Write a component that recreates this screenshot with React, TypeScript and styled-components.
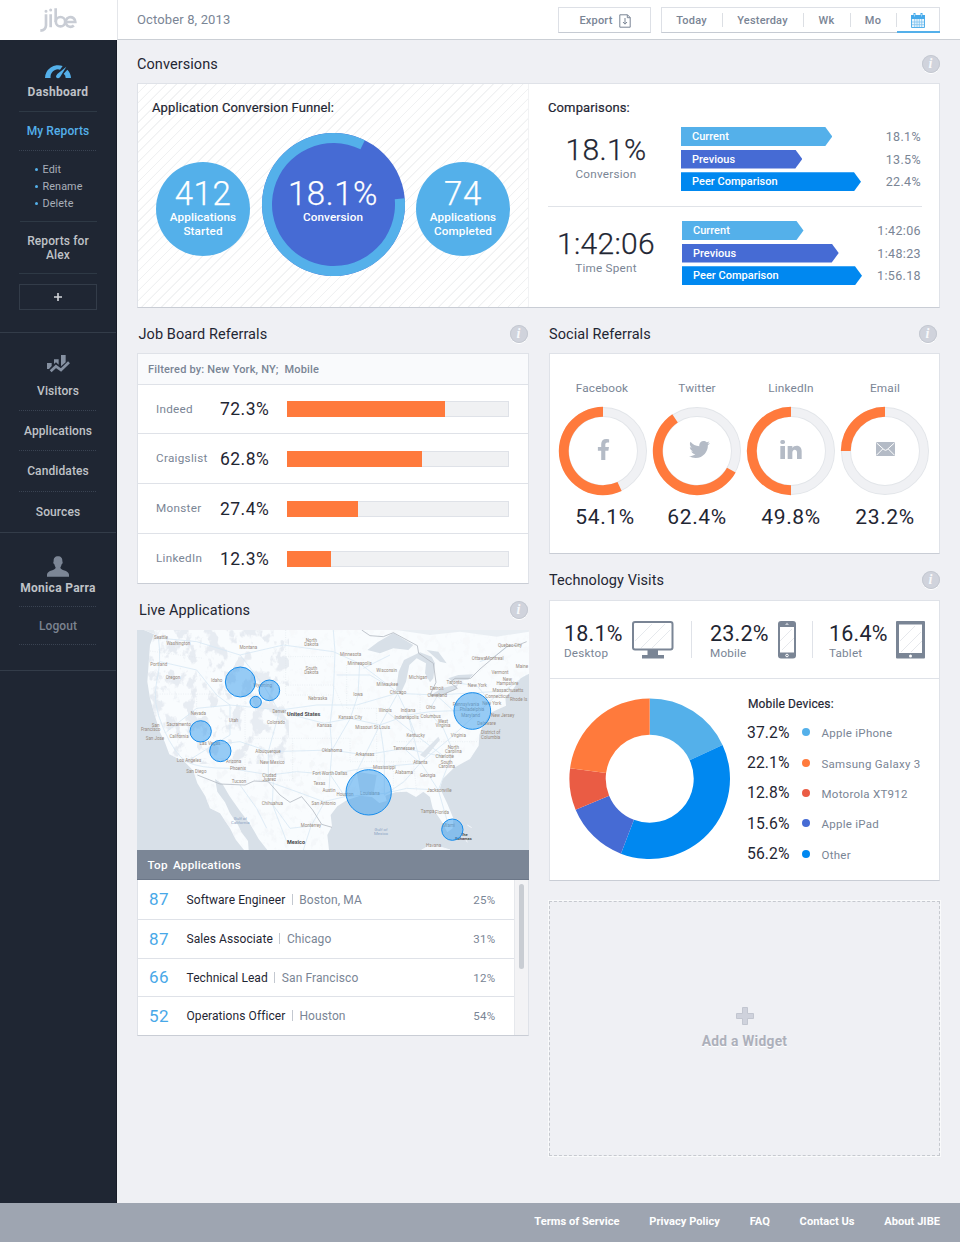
import React from 'react';
import styled, { createGlobalStyle, css } from 'styled-components';
import { FaFacebookF, FaTwitter } from 'react-icons/fa';

const c = {
  ink: '#1f2633',
  slate: '#7a8595',
  muted: '#b4bbc6',
  line: '#dfe2e8',
  page: '#eff0f4',
  sky: '#54b0ea',
  indigo: '#466bd4',
  blue: '#0088f0',
  orange: '#ff7a3c',
  red: '#ea5c44',
};

const Global = createGlobalStyle`
  * { box-sizing: border-box; }
  body { margin: 0; background: ${c.page}; }
  body, button { font-family: Roboto, "Liberation Sans", sans-serif; }
  button { margin: 0; padding: 0; border: 0; background: none; color: inherit; font: inherit; letter-spacing: inherit; }
  svg { display: block; flex: none; }
`;

const Page = styled.div`
  width: 960px;
  height: 1242px;
  display: grid;
  grid-template: 40px 1163px 39px / 117px 843px;
  color: ${c.ink};
`;

/* ---------- header ---------- */
const LogoCell = styled.div`
  background: #fff;
  display: flex;
  align-items: flex-start;
  padding: 8px 0 0 39px;
`;
const Header = styled.header`
  background: #fff;
  border-bottom: 1px solid #cbcfd5;
  border-left: 1px solid #e4e6ea;
  display: flex;
  align-items: flex-start;
  padding: 7px 20px 0 19px;
  color: ${c.slate};
`;
const DateText = styled.div`
  flex: 1;
  line-height: 25px;
  font-size: 13px;
  letter-spacing: 0.13px;
`;
const Box = styled.div`
  height: 26px;
  display: flex;
  border: 1px solid #dde0e6;
  border-bottom-color: #c6cbd3;
  font-size: 11px;
  font-weight: 500;
  letter-spacing: 0.2px;
  line-height: 24px;
  & + & { margin-left: 10px; }
`;
const ExportButton = styled.button`
  width: 91px;
  padding: 1px 0 0 1px;
  display: flex;
  align-items: center;
  justify-content: center;
  gap: 6px;
`;
const RangeButton = styled.button<{ $w: number; $active?: boolean }>`
  width: ${p => p.$w}px;
  height: ${p => (p.$active ? 25 : 24)}px;
  padding: 1px 2px 0 0;
  display: flex;
  align-items: center;
  justify-content: center;
  background: linear-gradient(#dcdfe4, #dcdfe4) right 5px / 1px 14px no-repeat;
  ${p => p.$active && css`
    background: none;
    border-bottom: 2px solid ${c.sky};
    margin-right: -1px;
  `}
`;

/* ---------- sidebar ---------- */
const Sidebar = styled.nav`
  background: ${c.ink};
  border-right: 1px solid #171c28;
  color: #bfc2c7;
  font-size: 12px;
  font-weight: 500;
  letter-spacing: 0.1px;
  text-align: center;
`;
const NavSection = styled.div<{ $h: number }>`
  height: ${p => p.$h}px;
  padding: 0 19px 0 20px;
  border-bottom: 1px solid #333c49;
`;
const NavItem = styled.div<{ $h: number; $top?: number; $dotted?: boolean; $plain?: boolean; $tone?: string; $bold?: boolean }>`
  height: ${p => p.$h}px;
  margin: 0 -19px 0 -20px;
  padding-top: ${p => p.$top ?? 0}px;
  display: flex;
  flex-direction: column;
  align-items: center;
  line-height: 14px;
  color: ${p => p.$tone ?? 'inherit'};
  ${p => p.$bold && css`font-weight: 700; letter-spacing: 0.3px;`}
  ${p => !p.$plain && css`
    background: ${p.$dotted
      ? 'repeating-linear-gradient(90deg, #3a4352 0 1px, transparent 1px 2px)'
      : 'linear-gradient(#2e3945, #2e3945)'} center bottom / 78px 1px no-repeat;
  `}
`;
const IconSlot = styled.div<{ $h: number }>`
  height: ${p => p.$h}px;
`;
const SubList = styled.ul`
  margin: 0;
  padding: 10px 0 0 15px;
  height: 71px;
  list-style: none;
  text-align: left;
  font-size: 10.8px;
  font-weight: 400;
  line-height: 17px;
  color: #a9afb9;
  border-bottom: 1px solid #2e3945;
  li { display: flex; align-items: center; gap: 4.5px; }
  li::before { content: ''; width: 3px; height: 3px; border-radius: 50%; background: ${c.sky}; }
`;
const AddButton = styled.button`
  margin: 10px 0 0 -1px;
  width: 78px;
  height: 26px;
  border: 1px solid #333c49;
  display: flex;
  align-items: center;
  justify-content: center;
`;

/* ---------- main ---------- */
const Main = styled.main`
  padding: 0 20px;
`;
const Columns = styled.div`
  display: grid;
  grid-template-columns: 392px 391px;
  column-gap: 20px;
`;
const Heading = styled.div<{ $h: number; $top: number; $left?: number; $right?: number }>`
  height: ${p => p.$h}px;
  padding: ${p => p.$top}px ${p => p.$right ?? 0}px 0 ${p => p.$left ?? 0}px;
  display: flex;
  align-items: center;
  justify-content: space-between;
  h2 { margin: 0; padding-top: 1px; font-size: 14.5px; font-weight: 400; letter-spacing: 0.07px; }
`;
const Card = styled.section<{ $h: number }>`
  height: ${p => p.$h}px;
  background: #fff;
  border: 1px solid ${c.line};
  border-bottom-color: #c9cdd5;
`;
const InfoDot = styled.span`
  width: 18px;
  height: 18px;
  border-radius: 50%;
  background: #d0d3dc;
  box-shadow: inset 0 0 0 1px #c4c8d1, 0 1px 0 #fff;
  color: #f8f9fb;
  font: italic 700 14px/18px "Liberation Serif", serif;
  text-align: center;
  padding-right: 1px;
`;

/* conversions */
const ConversionCard = styled(Card)`
  display: grid;
  grid-template-columns: 391px 1fr;
`;
const Funnel = styled.div`
  padding: 17px 0 0 14px;
  border-right: 1px solid #f1f2f4;
  background: repeating-linear-gradient(135deg, #fff 0 5.6px, #f0f1f2 6px 6.6px, #fff 7px);
`;
const SubTitle = styled.h3<{ $size?: number }>`
  margin: 0;
  font-size: ${p => p.$size ?? 13}px;
  line-height: 14px;
  font-weight: 400;
  letter-spacing: 0.12px;
  -webkit-text-stroke: 0.2px currentColor;
`;
const FunnelRow = styled.div`
  display: flex;
  align-items: flex-start;
  gap: 11.5px;
  padding: 18px 0 0 4px;
`;
const Bubble = styled.div<{ $big?: boolean }>`
  width: ${p => (p.$big ? 143 : 94)}px;
  height: ${p => (p.$big ? 143 : 94)}px;
  margin-top: ${p => (p.$big ? 0 : 29)}px;
  padding-top: ${p => (p.$big ? 44 : 15)}px;
  border-radius: 50%;
  position: relative;
  background: ${p => (p.$big ? c.indigo : c.sky)};
  color: #fff;
  text-align: center;
  font-size: 11.7px;
  font-weight: 500;
  line-height: 14px;
  letter-spacing: 0.1px;
  strong {
    display: block;
    position: relative;
    font-size: 33px;
    font-weight: 300;
    line-height: 33px;
    letter-spacing: 0.6px;
    -webkit-text-stroke: 0.25px #fff;
  }
  span { position: relative; }
  svg { position: absolute; inset: 0; }
`;
const Comparisons = styled.div`
  padding: 17px 17px 0 19px;
`;
const Group = styled.div<{ $top: number; $h: number; $shift?: number }>`
  display: grid;
  grid-template-columns: ${p => 133 + (p.$shift ?? 0)}px 180px 1fr;
  height: ${p => p.$h}px;
  padding-top: ${p => p.$top}px;
  & + & { border-top: 1px solid #e0e3e8; }
`;
const BigStat = styled.div`
  width: 116px;
  text-align: center;
  font-size: 11.7px;
  line-height: 14px;
  letter-spacing: 0.25px;
  color: ${c.slate};
  padding-top: 6px;
  strong {
    display: block;
    color: ${c.ink};
    font-size: 30px;
    font-weight: 300;
    line-height: 34px;
    letter-spacing: 0.3px;
    margin: 0 -4px;
    -webkit-text-stroke: 0.25px ${c.ink};
  }
`;
const Arrows = styled.div`
  display: flex;
  flex-direction: column;
  gap: 3.6px;
`;
const Arrow = styled.div<{ $w: number; $color: string }>`
  width: ${p => p.$w}px;
  height: 19px;
  padding-left: 11px;
  background: ${p => p.$color};
  clip-path: polygon(0 0, calc(100% - 7px) 0, 100% 50%, calc(100% - 7px) 100%, 0 100%);
  color: #fff;
  font-size: 11px;
  font-weight: 500;
  line-height: 19px;
  letter-spacing: 0.03px;
`;
const ArrowValues = styled(Arrows)`
  text-align: right;
  font-size: 12.5px;
  line-height: 19px;
  letter-spacing: 0.35px;
  padding-right: 1px;
  color: ${c.slate};
`;

/* job board */
const FilterRow = styled.div`
  height: 31px;
  padding: 1px 0 0 10px;
  background: #f9fafc;
  border-bottom: 1px solid ${c.line};
  font-size: 11px;
  font-weight: 500;
  line-height: 30px;
  letter-spacing: 0.18px;
  white-space: pre;
  color: ${c.slate};
`;
const JobRow = styled.div<{ $h: number }>`
  height: ${p => p.$h}px;
  display: grid;
  grid-template-columns: 64px 67px 222px;
  align-items: center;
  padding-left: 18px;
  & + & { border-top: 1px solid ${c.line}; }
`;
const JobName = styled.span`
  padding-bottom: 1px;
  font-size: 11.7px;
  letter-spacing: 0.3px;
  color: ${c.slate};
`;
const JobPct = styled.strong`
  font-size: 17.5px;
  font-weight: 400;
  letter-spacing: 0.45px;
`;
const Track = styled.div`
  height: 16px;
  background: #f0f1f3;
  border: 1px solid ${c.line};
`;
const Fill = styled.div`
  height: 16px;
  margin: -1px 0 0 -1px;
  background: ${c.orange};
`;

/* social */
const SocialCard = styled(Card)`
  display: grid;
  grid-template-columns: repeat(4, 94px);
  padding: 27px 0 0 6px;
`;
const SocialItem = styled.div`
  display: flex;
  flex-direction: column;
  align-items: center;
  font-size: 11.8px;
  line-height: 14px;
  letter-spacing: 0.15px;
  color: ${c.slate};
  strong {
    color: ${c.ink};
    font-size: 21px;
    font-weight: 400;
    line-height: 24px;
    letter-spacing: 0.6px;
  }
  &:first-child span { margin-left: -2px; }
  &:first-child strong { margin-left: 4px; }
`;
const Ring = styled.div<{ $nudge?: number }>`
  width: 90px;
  height: 90px;
  margin: 11px 0 9px;
  padding: 0 0 4px ${p => p.$nudge ?? 0}px;
  position: relative;
  display: grid;
  place-items: center;
  color: ${c.muted};
  > svg:first-child { position: absolute; inset: 0; }
`;

/* technology */
const DeviceRow = styled.div`
  height: 78px;
  display: flex;
  align-items: center;
  padding-left: 14px;
  border-bottom: 1px solid ${c.line};
`;
const Device = styled.div<{ $w: number; $gap: number; $pad?: number }>`
  width: ${p => p.$w}px;
  height: 37px;
  display: flex;
  gap: ${p => p.$gap}px;
  padding-left: ${p => p.$pad ?? 0}px;
  border-left: ${p => (p.$pad ? `1px solid ${c.line}` : 0)};
`;
const DeviceStat = styled.div`
  width: 60px;
  font-size: 11.7px;
  line-height: 14px;
  letter-spacing: 0.2px;
  color: ${c.slate};
  strong {
    display: block;
    color: ${c.ink};
    font-size: 21.5px;
    font-weight: 400;
    line-height: 25px;
    letter-spacing: 0.2px;
  }
`;
const DonutRow = styled.div`
  display: flex;
  padding: 19px 0 0 19px;
`;
const Legend = styled.div`
  padding-left: 16px;
  margin-top: -1px;
  h3 { margin: 0 0 6px 1px; }
`;
const LegendRow = styled.div`
  height: 30.4px;
  display: grid;
  grid-template-columns: 55px 19.5px auto;
  align-items: center;
  strong { font-size: 15.7px; font-weight: 400; letter-spacing: 0.1px; }
  span { padding-top: 2px; font-size: 11.5px; letter-spacing: 0.27px; color: ${c.slate}; }
`;
const Dot = styled.i<{ $color: string }>`
  width: 8px;
  height: 8px;
  border-radius: 50%;
  background: ${p => p.$color};
`;
const AddWidget = styled.button`
  width: 391px;
  height: 255px;
  margin-top: 20px;
  padding-bottom: 3px;
  border: 1px dashed #c6c9cf;
  outline: 1px solid #f9fafb;
  display: flex;
  flex-direction: column;
  align-items: center;
  justify-content: center;
  gap: 7px;
  color: #adb0bb;
  font-size: 13.8px;
  font-weight: 700;
  letter-spacing: 0.25px;
  text-shadow: 0 1px 0 #fff;
`;

/* live applications */
const ListHead = styled.div`
  height: 30px;
  padding: 1px 0 0 10.5px;
  background: #7b8696;
  border-bottom: 1px solid #6c7788;
  color: #fff;
  font-size: 11.7px;
  font-weight: 500;
  line-height: 28px;
  letter-spacing: 0.25px;
  word-spacing: 2px;
`;
const List = styled.div`
  height: 156px;
  display: grid;
  grid-template-columns: 1fr 14px;
  background: #fff;
  border: 1px solid ${c.line};
  border-top: 0;
  border-bottom-color: #c9cdd5;
`;
const AppRow = styled.div<{ $h: number }>`
  height: ${p => p.$h}px;
  display: grid;
  grid-template-columns: 37.5px 1fr auto;
  align-items: center;
  padding: 0 18.5px 0 11px;
  font-size: 12px;
  letter-spacing: 0.08px;
  & + & { border-top: 1px solid ${c.line}; }
  strong { padding-bottom: 1px; color: #48a8e8; font-size: 17px; font-weight: 400; letter-spacing: 0.4px; }
  em { font-style: normal; color: ${c.slate}; letter-spacing: 0.1px; }
  em::before { content: ''; display: inline-block; width: 1px; height: 11px; margin: 0 6.5px; vertical-align: -1px; background: #c3c8d0; }
  small { font-size: 11.5px; letter-spacing: 0.3px; color: ${c.slate}; }
`;
const Scroll = styled.div`
  background: #f3f3f5;
  border-left: 1px solid #e6e8ec;
  padding: 4px 0 0 4px;
  &::before { content: ''; display: block; width: 5px; height: 85px; border-radius: 3px; background: #c9cdd3; }
`;

const Footer = styled.footer`
  grid-column: 1 / 3;
  background: #9ea5b1;
  color: #fff;
  display: flex;
  justify-content: flex-end;
  gap: 29.8px;
  padding-right: 20px;
  font-size: 11.1px;
  font-weight: 700;
  letter-spacing: 0.02px;
  line-height: 38px;
`;

/* ---------- drawings ---------- */
const pt = (cx: number, cy: number, r: number, a: number) => {
  const t = (a * Math.PI) / 180;
  return `${(cx + r * Math.sin(t)).toFixed(2)} ${(cy - r * Math.cos(t)).toFixed(2)}`;
};
const sector = (cx: number, cy: number, ro: number, ri: number, a: number, b: number) => {
  const big = b - a > 180 ? 1 : 0;
  return `M${pt(cx, cy, ro, a)}A${ro} ${ro} 0 ${big} 1 ${pt(cx, cy, ro, b)}L${pt(cx, cy, ri, b)}A${ri} ${ri} 0 ${big} 0 ${pt(cx, cy, ri, a)}Z`;
};

const Logo = () => (
  <svg width="38" height="25" viewBox="117 24 114 75" fill="none" stroke="#c9cdd5" strokeWidth="8">
    <path d="M138 43V76Q137 91 121 92M152 43V82M167 25V66" />
    <circle cx="181.500" cy="65" r="14" />
    <path d="M198 66H226A14.500 14.500 0 1 0 221.500 76.500" />
    <circle cx="138" cy="34" r="2" strokeWidth="5" />
    <circle cx="152" cy="30" r="2" strokeWidth="5" />
  </svg>
);
const ExportIcon = () => (
  <svg width="12" height="14" viewBox="0 0 12 14" fill="none" stroke={c.slate}>
    <path d="M.8 .8H8.500L11.200 3.500V13.200H.8ZM8.300 .8V3.700H11.200M6 4V10M4 8L6 10.200L8 8" />
  </svg>
);
const CalendarIcon = () => (
  <svg width="14" height="15" viewBox="0 0 14 15">
    <path d="M0 2H14V6H0ZM2.500 0H4.500V4H2.500ZM9.500 0H11.500V4H9.500Z" fill="#45a9ea" />
    <path d="M3.500 1V3.500M10.500 1V3.500" stroke="#9bd2f5" />
    <path d="M.5 6V14.500H13.500V6" fill="#eaf6fd" stroke="#54b0ea" />
    <path d="M1 9H13M1 11.700H13M3.700 6V14M6 6V14M8.300 6V14M10.700 6V14" stroke="#7dc3ef" strokeWidth=".8" />
  </svg>
);
const GaugeIcon = () => (
  <svg width="26" height="14" viewBox="0 0 78 42" fill={c.sky}>
    <path d="M0 39A39 39 0 0 1 53 3L45 14A22 22 0 0 0 17 39Z" />
    <path d="M67 14A39 39 0 0 1 78 39H62Q62 30 56 26Z" />
    <path d="M64 5L45 37Q38 43 33 36Q33 31 37 27Z" />
  </svg>
);
const ChartIcon = () => (
  <svg width="23" height="18" viewBox="0 0 69 54" fill="#8590a1">
    <path d="M0 24H14V33L6 42H0ZM21 13H35V29L27 22L21 27ZM42 0H56V22L42 34Z" />
    <path d="M11 49L27 34L42 45L66 22" fill="none" stroke="#8590a1" strokeWidth="8" />
  </svg>
);
const PersonIcon = () => (
  <svg width="22" height="21" viewBox="0 0 66 62" fill="#7c8696">
    <path d="M33 0C42 0 47 6 46 15C48 18 47 23 44 24C43 29 41 31 40 34C40 44 64 41 66 55V62H0V55C2 41 26 44 26 34C25 31 23 29 22 24C19 23 18 18 20 15C19 6 24 0 33 0Z" />
  </svg>
);
const PlusIcon = () => (
  <svg width="8" height="8" viewBox="0 0 8 8" stroke="#d3d6da" strokeWidth="1.6"><path d="M4 0V8M0 4H8" /></svg>
);
const LinkedInIcon = () => (
  <svg width="22" height="19" viewBox="0 0 66 57" fill="currentColor">
    <rect x="1" y="0" width="14" height="12" rx="5" />
    <path d="M1 18H15V57H1ZM23 18H37V24C42 15 65 13 65 34V57H51V38C51 26 37 27 37 38V57H23Z" />
  </svg>
);
const MailIcon = () => (
  <svg width="19" height="14" viewBox="0 0 57 42">
    <rect width="57" height="42" rx="3" fill={c.muted} />
    <path d="M2 3L24 23Q28.500 27 33 23L55 3M2 39L20 21M55 39L37 21" fill="none" stroke="#fff" strokeWidth="3" />
  </svg>
);
const Monitor = () => (
  <svg width="42" height="38" viewBox="0 0 42 38">
    <path d="M15.500 28H26V34H32V37.500H10V34H15.500Z" fill={c.slate} />
    <rect x="1" y="1" width="39.500" height="27.500" rx="2" fill="#fff" stroke={c.slate} strokeWidth="2" />
    <path d="M3 20L20 3M9 27L33 3M20 27L38 9" stroke="#e6e9ed" />
  </svg>
);
const Phone = () => (
  <svg width="18" height="38" viewBox="0 0 18 38">
    <rect width="18" height="37.500" rx="3" fill={c.slate} />
    <rect x="2" y="6" width="14" height="25.500" fill="#fff" />
    <path d="M2 20L14 8M4 29L16 17" stroke="#e6e8ec" />
    <path d="M7 4L9 1.500L11 4Z" fill="#c6ccd5" />
    <circle cx="9" cy="34.500" r="1.300" fill="none" stroke="#fff" />
  </svg>
);
const Tablet = () => (
  <svg width="29" height="38" viewBox="0 0 29 38">
    <rect width="29" height="37.500" rx="1" fill={c.slate} />
    <rect x="3" y="3.500" width="23" height="28.500" fill="#fff" />
    <path d="M4 20L19 5M5 31L25 11M15 31L26 20" stroke="#e6e8ec" />
    <circle cx="14.500" cy="35" r="1.500" fill="#fff" />
  </svg>
);
const BigPlus = () => (
  <svg width="20" height="20" viewBox="0 0 20 20">
    <path d="M7.500 1.500H12.500V7.500H18.500V12.500H12.500V18.500H7.500V12.500H1.500V7.500H7.500Z" fill="#cfd2dc" stroke="#c2c6d0" />
  </svg>
);
const RingChart = ({ from, to }: { from: number; to: number }) => (
  <svg width="90" height="90" viewBox="0 0 90 90">
    <circle cx="45" cy="45" r="39" fill="none" stroke="#e2e5e9" strokeWidth="10" />
    <circle cx="45" cy="45" r="39" fill="none" stroke="#f0f1f4" strokeWidth="8.200" />
    <path d={sector(45, 45, 44.2, 34.3, from, to)} fill={c.orange} />
  </svg>
);

const slices: [number, number, string][] = [
  [0, 65.1, c.sky], [65.1, 201, c.blue], [201, 247.3, c.indigo], [247.3, 277.5, c.red], [277.5, 360, c.orange],
];
const Donut = () => (
  <svg width="162" height="162" viewBox="0 0 162 162">
    {slices.map(([a, b, f]) => <path key={a} d={sector(80.7, 80.7, 80.3, 44, a, b)} fill={f} />)}
  </svg>
);

const places: [number, number, string][] = [
  [93, 128, 'Seattle'], [145, 146, 'Washington'], [86, 208, 'Portland'], [129, 248, 'Oregon'], [355, 158, 'Montana'],
  [260, 257, 'Idaho'], [398, 271, 'Wyoming'], [205, 357, 'Nevada'], [311, 377, 'Utah'], [146, 390, 'Sacramento'],
  [77, 391, 'San'], [62, 403, 'Francisco'], [75, 432, 'San Jose'], [147, 426, 'California'], [240, 446, 'Las Vegas'],
  [177, 497, 'Los Angeles'], [199, 529, 'San Diego'], [311, 499, 'Arizona'], [324, 520, 'Phoenix'], [327, 559, 'Tucson'],
  [544, 136, 'North'], [544, 149, 'Dakota'], [544, 221, 'South'], [544, 234, 'Dakota'], [563, 312, 'Nebraska'],
  [448, 350, 'Denver'], [438, 382, 'Colorado'], [414, 470, 'Albuquerque'], [427, 504, 'New Mexico'], [418, 541, 'Ciudad'],
  [418, 553, 'Juarez'], [427, 627, 'Chihuahua'], [583, 393, 'Kansas'], [606, 467, 'Oklahoma'], [600, 537, 'Fort Worth   Dallas'],
  [568, 567, 'Texas'], [597, 588, 'Austin'], [581, 626, 'San Antonio'], [645, 600, 'Houston'], [543, 693, 'Monterrey'],
  [662, 179, 'Minnesota'], [689, 206, 'Minneapolis'], [770, 228, 'Wisconsin'], [772, 269, 'Milwaukee'], [804, 294, 'Chicago'],
  [864, 247, 'Michigan'], [684, 299, 'Iowa'], [661, 368, 'Kansas City'], [728, 398, 'Missouri  St Louis'], [766, 347, 'Illinois'],
  [834, 347, 'Indiana'], [830, 368, 'Indianapolis'], [902, 337, 'Ohio'], [902, 364, 'Columbus'], [920, 281, 'Detroit'],
  [922, 303, 'Cleveland'], [857, 421, 'Kentucky'], [939, 379, 'West'], [939, 391, 'Virginia'], [985, 421, 'Virginia'],
  [822, 462, 'Tennessee'], [705, 480, 'Arkansas'], [763, 519, 'Mississippi'], [822, 534, 'Alabama'], [893, 541, 'Georgia'],
  [871, 504, 'Atlanta'], [970, 457, 'North'], [970, 470, 'Carolina'], [944, 486, 'Charlotte'], [950, 503, 'South'],
  [950, 516, 'Carolina'], [928, 586, 'Jacksonville'], [893, 651, 'Tampa'], [936, 654, 'Florida'], [956, 692, 'Miami'],
  [720, 597, 'Louisiana'], [911, 752, 'Havana'], [973, 262, 'Toronto'], [1042, 273, 'New York'], [1047, 191, 'Ottawa'],
  [1094, 191, 'Montreal'], [1140, 152, 'Quebec City'], [1110, 232, 'Vermont'], [1132, 254, 'New'], [1132, 267, 'Hampshire'],
  [1134, 287, 'Massachusetts'], [1102, 306, 'Connecticut'], [1085, 325, 'New York'], [1166, 313, 'Rhode Is'], [1118, 361, 'New Jersey'],
  [1070, 385, 'Delaware'], [1082, 414, 'District of'], [1082, 427, 'Columbia'], [1008, 329, 'Pennsylvania'], [1026, 345, 'Philadelphia'],
  [1022, 363, 'Maryland'], [1176, 214, 'Maine'],
];
const bubbles = [
  [331, 261, 45], [418, 286, 31], [377, 321, 17], [212, 409, 32], [271, 468, 32], [1027, 348, 55], [716, 592, 68], [967, 704, 32],
];
const land = 'M42 105L72 118L60 150L56 205L52 260L60 310L74 360L90 412L104 440L118 478L165 502L190 527L202 565L226 604L240 640L270 655L300 700L318 735L342 765H356L354 738L334 712L324 690L300 655L285 622L262 590L255 552L278 568L298 602L330 648L362 690L386 732L412 765H597L592 720L606 694L602 660L622 634L650 616L690 602L726 606L748 624L770 618L766 602L796 592L830 590L858 606L880 590L900 606L908 640L934 678L952 712L968 700L970 670L952 626L930 580L938 552L972 518L1020 492L1046 452L1048 420L1058 392L1084 352L1128 332L1126 306L1148 284L1172 250L1197 236V105Z';

const UsMap = () => (
  <svg width="392" height="220" viewBox="21 105 1176 660">
    <defs>
      <clipPath id="land"><path d={land} /></clipPath>
      <filter id="relief" x="0" y="0" width="1" height="1">
        <feTurbulence type="fractalNoise" baseFrequency="0.03 0.022" numOctaves="4" seed="7" />
        <feColorMatrix values="0 0 0 0 .8  0 0 0 0 .835  0 0 0 0 .885  9 0 0 0 -4.6" />
      </filter>
      <filter id="hills" x="0" y="0" width="1" height="1">
        <feTurbulence type="fractalNoise" baseFrequency="0.05 0.04" numOctaves="3" seed="21" />
        <feColorMatrix values="0 0 0 0 .9  0 0 0 0 .925  0 0 0 0 .95  7 0 0 0 -3.8" />
      </filter>
    </defs>
    <rect x="21" y="105" width="1176" height="660" fill="#d8e0e8" />
    <path d={land} fill="#f9fcfe" />
    <g clipPath="url(#land)">
      <rect x="21" y="105" width="455" height="400" filter="url(#relief)" />
      <rect x="21" y="490" width="560" height="275" filter="url(#hills)" opacity=".8" />
      <rect x="476" y="105" width="721" height="500" filter="url(#hills)" opacity=".45" />
      <g fill="none" stroke="#d9e8f4" strokeWidth="2.500">
        <path d="M85 125Q95 200 80 260T100 400T170 500T300 520L420 540L500 530L600 538L700 520L870 505L960 430L1090 310L1190 240" />
        <path d="M90 200L200 225L260 300L300 330L450 345L560 330L680 330L800 295L920 300L1090 290" />
        <path d="M95 130L200 140L330 180L460 150L610 170L690 206L800 290L834 360L870 500L925 585L955 690" />
        <path d="M110 410L200 340L300 330L300 420L250 450L170 500M240 450L330 440L420 470L606 465L705 480L822 460L945 486" />
        <path d="M415 560L415 470L448 350L400 270L330 180M448 350L583 385L661 370L750 390L834 360L900 350L1020 345" />
        <path d="M597 588L600 538L606 465L600 390L610 300L615 170L610 105M689 206L684 300L661 370L606 465" />
        <path d="M415 560L500 590L581 620L645 605L766 595L830 580L925 585M645 605L600 538M763 600L763 480L750 390L804 294" />
        <path d="M430 560L427 627L480 700L543 693L581 626M427 627L470 740M543 693L520 765M330 570L380 640L410 700" />
        <path d="M822 460L857 420L834 360M871 505L822 460M870 505L822 560L763 600M899 355L940 400L970 470L925 585M1049 200L1092 185L1140 150M973 262L1042 273L1080 320" />
        <path d="M750 390L705 480L645 600M902 337L922 303L973 350M766 347L857 420L944 486M700 220L780 180M620 240H720L770 270" />
      </g>
      <g fill="none" stroke="#dfe5eb" strokeWidth="1.500" strokeDasharray="3 4">
        <path d="M60 168L220 190M75 297H390M467 105V300H610M467 185H610M467 270H610L640 340M200 297V380L270 450M345 297V560M345 430H660M488 430V555H370M660 430V500H740M740 340V500H900M650 210V340H780M870 300V400M800 440H1045M790 500V590M850 500L860 590" />
      </g>
      <path d="M712 165L745 140L790 114L850 150L835 165L790 160L750 175ZM798 285L806 230L822 195L870 172L905 185L915 205L910 250L900 262L885 235L888 205L860 190L838 210L828 260L812 295ZM900 302L935 280L985 268L975 285L935 300ZM955 250L985 240L1030 238L1015 254L965 258ZM890 165L925 170L950 205L930 200Z" fill="#d8e0e8" />
      <path d="M800 105L900 120L990 110L1100 125L1197 110V105Z" fill="#e9eef3" />
      <path d="M870 480L925 425L930 435L885 488ZM680 530L740 540L730 600L690 590Z" fill="#dde4eb" />
    </g>
    <path d="M42 105L76 118L72 105Z" fill="#e7ecf1" />
    <path d="M875 765L905 748L960 765ZM1004 728L1012 742M1012 690L1025 698" fill="#f3f6fa" stroke="#f3f6fa" strokeWidth="3" />
    <g fill="none" stroke="#b4bac3" strokeWidth="2.500">
      <path d="M695 105L720 122L760 125L790 113L862 152L866 175L910 205L918 262L900 300L935 300L982 280L960 262L975 250L1022 250L1050 222L1100 180L1130 155L1165 150L1190 140" />
      <path d="M202 540L270 567L345 570L372 558L415 560L450 600L480 622L515 605L548 645L575 688L606 697" />
    </g>
    <g fontSize="13.5" textAnchor="middle" fill="#96897d">
      {places.map(([x, y, t], i) => <text key={i} x={x} y={y + 4}>{t}</text>)}
    </g>
    <g fontSize="13" textAnchor="middle" fill="#8ba3c4">
      <text x="331" y="675">Gulf of</text><text x="331" y="687">California</text>
      <text x="753" y="708">Gulf of</text><text x="753" y="720">Mexico</text>
    </g>
    <g fontSize="16.5" fontWeight="700" textAnchor="middle" fill="#4a4a4c">
      <text x="521" y="363">United States</text><text x="498" y="747">Mexico</text>
      <text x="1003" y="722" fontSize="12">The</text><text x="1000" y="734" fontSize="12">Bahamas</text>
    </g>
    <g fill="#45a3ec" fillOpacity=".55" stroke="#168cec" strokeWidth="3">
      {bubbles.map(([x, y, r]) => <circle key={x} cx={x} cy={y} r={r} />)}
    </g>
  </svg>
);

/* ---------- data ---------- */
const arrows = [
  { big: '18.1%', label: 'Conversion', rows: [[151.3, '18.1%'], [121.3, '13.5%'], [180, '22.4%']] },
  { big: '1:42:06', label: 'Time Spent', rows: [[121.5, '1:42:06'], [156.7, '1:48:23'], [180, '1:56.18']] },
] as { big: string; label: string; rows: [number, string][] }[];
const arrowStyle: [string, string][] = [['Current', c.sky], ['Previous', c.indigo], ['Peer Comparison', c.blue]];
const jobs: [string, string, number, number][] = [
  ['Indeed', '72.3%', 71.6, 48], ['Craigslist', '62.8%', 61.5, 50], ['Monster', '27.4%', 32.1, 50], ['LinkedIn', '12.3%', 20, 50],
];
const legend: [string, string, string][] = [
  ['37.2%', 'Apple iPhone', c.sky], ['22.1%', 'Samsung Galaxy 3', c.orange], ['12.8%', 'Motorola XT912', c.red],
  ['15.6%', 'Apple iPad', c.indigo], ['56.2%', 'Other', c.blue],
];
const apps: [string, string, string, string, number][] = [
  ['87', 'Software Engineer', 'Boston, MA', '25%', 39], ['87', 'Sales Associate', 'Chicago', '31%', 39],
  ['66', 'Technical Lead', 'San Francisco', '12%', 38], ['52', 'Operations Officer', 'Houston', '54%', 39],
];

const Title = ({ children, ...p }: { children: string; $h: number; $top: number; $left?: number; $right?: number }) => (
  <Heading {...p}><h2>{children}</h2><InfoDot>i</InfoDot></Heading>
);

export default function App() {
  return (
    <Page>
      <Global />
      <LogoCell><Logo /></LogoCell>
      <Header>
        <DateText>October 8, 2013</DateText>
        <Box><ExportButton>Export <ExportIcon /></ExportButton></Box>
        <Box>
          <RangeButton $w={61}>Today</RangeButton>
          <RangeButton $w={81}>Yesterday</RangeButton>
          <RangeButton $w={47}>Wk</RangeButton>
          <RangeButton $w={46}>Mo</RangeButton>
          <RangeButton $w={43} $active><CalendarIcon /></RangeButton>
        </Box>
      </Header>

      <Sidebar>
        <NavSection $h={293}>
          <NavItem $h={72} $top={25} $bold><IconSlot $h={20}><GaugeIcon /></IconSlot>Dashboard</NavItem>
          <NavItem $h={39} $top={12} $dotted $tone={c.sky}>My Reports</NavItem>
          <SubList><li>Edit</li><li>Rename</li><li>Delete</li></SubList>
          <NavItem $h={52} $top={12}><span>Reports for<br />Alex</span></NavItem>
          <AddButton><PlusIcon /></AddButton>
        </NavSection>
        <NavSection $h={200}>
          <NavItem $h={78} $top={22} $dotted><IconSlot $h={29}><ChartIcon /></IconSlot>Visitors</NavItem>
          <NavItem $h={40} $top={13} $dotted>Applications</NavItem>
          <NavItem $h={41} $top={13} $dotted>Candidates</NavItem>
          <NavItem $h={40} $top={13} $plain>Sources</NavItem>
        </NavSection>
        <NavSection $h={138}>
          <NavItem $h={74} $top={23} $dotted $bold><IconSlot $h={25}><PersonIcon /></IconSlot>Monica Parra</NavItem>
          <NavItem $h={38} $top={12} $dotted $tone="#7b8390">Logout</NavItem>
        </NavSection>
      </Sidebar>

      <Main>
        <Title $h={43} $top={4}>Conversions</Title>
        <ConversionCard $h={225}>
          <Funnel>
            <SubTitle>Application Conversion Funnel:</SubTitle>
            <FunnelRow>
              <Bubble><strong>412</strong><span>Applications<br />Started</span></Bubble>
              <Bubble $big>
                <svg viewBox="0 0 143 143"><path d={sector(71.5, 71.5, 71.5, 61.5, 85, 386)} fill={c.sky} /></svg>
                <strong>18.1%</strong><span>Conversion</span>
              </Bubble>
              <Bubble><strong>74</strong><span>Applications<br />Completed</span></Bubble>
            </FunnelRow>
          </Funnel>
          <Comparisons>
            <SubTitle>Comparisons:</SubTitle>
            {arrows.map((g, i) => (
              <Group key={g.big} $top={i ? 14 : 12} $h={i ? 95 : 91} $shift={i}>
                <BigStat><strong>{g.big}</strong>{g.label}</BigStat>
                <Arrows>
                  {g.rows.map(([w], j) => <Arrow key={j} $w={w} $color={arrowStyle[j][1]}>{arrowStyle[j][0]}</Arrow>)}
                </Arrows>
                <ArrowValues>{g.rows.map(([, v]) => <div key={v}>{v}</div>)}</ArrowValues>
              </Group>
            ))}
          </Comparisons>
        </ConversionCard>

        <Columns>
          <div>
            <Title $h={45} $top={6} $left={1.5} $right={1}>Job Board Referrals</Title>
            <Card $h={231}>
              <FilterRow>{'Filtered by: New York, NY;  Mobile'}</FilterRow>
              {jobs.map(([name, pct, w, h]) => (
                <JobRow key={name} $h={h}>
                  <JobName>{name}</JobName><JobPct>{pct}</JobPct>
                  <Track><Fill style={{ width: `${w}%` }} /></Track>
                </JobRow>
              ))}
            </Card>
            <Title $h={46} $top={5} $left={2} $right={1}>Live Applications</Title>
            <UsMap />
            <ListHead>Top Applications</ListHead>
            <List>
              <div>
                {apps.map(([n, job, city, pct, h]) => (
                  <AppRow key={job} $h={h}>
                    <strong>{n}</strong><span>{job}<em>{city}</em></span><small>{pct}</small>
                  </AppRow>
                ))}
              </div>
              <Scroll />
            </List>
          </div>
          <div>
            <Title $h={45} $top={6} $right={3}>Social Referrals</Title>
            <SocialCard $h={201}>
              <SocialItem><span>Facebook</span><Ring><RingChart from={155} to={360} /><FaFacebookF size={21} /></Ring><strong>54.1%</strong></SocialItem>
              <SocialItem><span>Twitter</span><Ring $nudge={4}><RingChart from={119} to={326} /><FaTwitter size={21} /></Ring><strong>62.4%</strong></SocialItem>
              <SocialItem><span>LinkedIn</span><Ring><RingChart from={180} to={360} /><LinkedInIcon /></Ring><strong>49.8%</strong></SocialItem>
              <SocialItem><span>Email</span><Ring><RingChart from={270} to={360} /><MailIcon /></Ring><strong>23.2%</strong></SocialItem>
            </SocialCard>
            <Title $h={46} $top={6}>Technology Visits</Title>
            <Card $h={281}>
              <DeviceRow>
                <Device $w={127} $gap={8}><DeviceStat><strong>18.1%</strong>Desktop</DeviceStat><Monitor /></Device>
                <Device $w={121} $gap={8} $pad={18}><DeviceStat><strong>23.2%</strong>Mobile</DeviceStat><Phone /></Device>
                <Device $w={116} $gap={7} $pad={16}><DeviceStat><strong>16.4%</strong>Tablet</DeviceStat><Tablet /></Device>
              </DeviceRow>
              <DonutRow>
                <Donut />
                <Legend>
                  <SubTitle $size={12}>Mobile Devices:</SubTitle>
                  {legend.map(([pct, name, color]) => (
                    <LegendRow key={name}><strong>{pct}</strong><Dot $color={color} /><span>{name}</span></LegendRow>
                  ))}
                </Legend>
              </DonutRow>
            </Card>
            <AddWidget><BigPlus />Add a Widget</AddWidget>
          </div>
        </Columns>
      </Main>

      <Footer>
        <span>Terms of Service</span><span>Privacy Policy</span><span>FAQ</span><span>Contact Us</span><span>About JIBE</span>
      </Footer>
    </Page>
  );
}
